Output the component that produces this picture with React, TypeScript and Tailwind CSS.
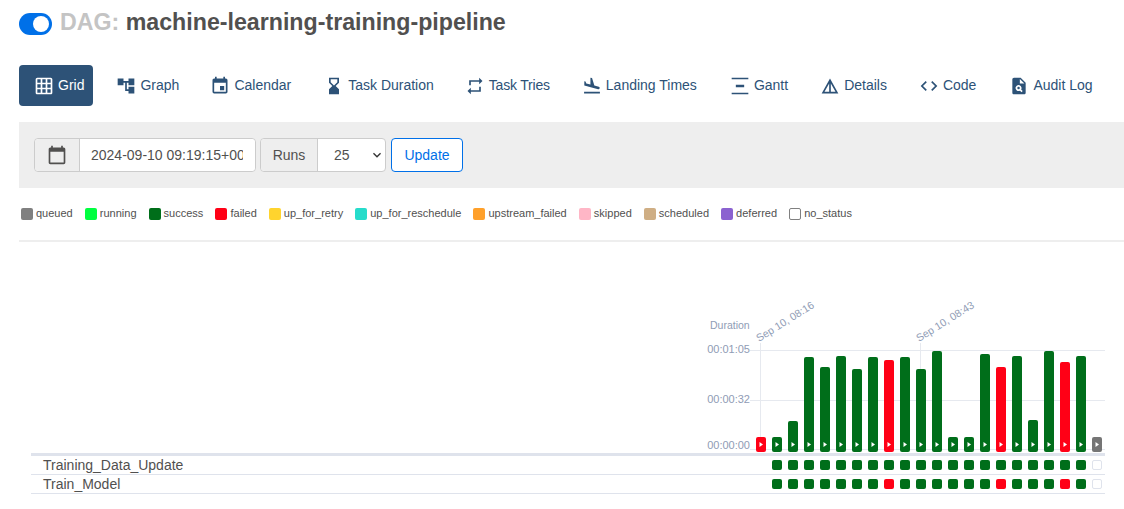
import React from "react";
import {
  MdGridOn, MdAccountTree, MdEvent, MdHourglassBottom, MdRepeat, MdFlightLand,
  MdVerticalDistribute, MdDetails, MdCode, MdPlagiarism, MdCalendarToday, MdExpandMore,
} from "react-icons/md";

const FONT = "font-['Liberation_Sans',Arial,sans-serif]";

const tabs = [
  { label: "Grid", Icon: MdGridOn, active: true, cls: "mr-[7px] bg-[#2d5277] pl-[15px] pr-[9px] text-white" },
  { label: "Graph", Icon: MdAccountTree, cls: "pl-[16px] pr-[15px] text-[#2d5277]" },
  { label: "Calendar", Icon: MdEvent, cls: "pl-[16px] pr-[17px] text-[#2d5277]" },
  { label: "Task Duration", Icon: MdHourglassBottom, cls: "pl-[16px] pr-[15px] text-[#2d5277]" },
  { label: "Task Tries", Icon: MdRepeat, cls: "pl-[16px] pr-[16px] tracking-[-0.2px] text-[#2d5277]" },
  { label: "Landing Times", Icon: MdFlightLand, cls: "pl-[16px] pr-[17px] text-[#2d5277]" },
  { label: "Gantt", Icon: MdVerticalDistribute, cls: "px-[16px] text-[#2d5277]" },
  { label: "Details", Icon: MdDetails, cls: "px-[16px] text-[#2d5277]" },
  { label: "Code", Icon: MdCode, cls: "pl-[16px] pr-[17px] text-[#2d5277]" },
  { label: "Audit Log", Icon: MdPlagiarism, cls: "px-[16px] text-[#2d5277]" },
];

const legend = [
  { label: "queued", cls: "bg-[#808080]" },
  { label: "running", cls: "bg-[#00ff40]" },
  { label: "success", cls: "bg-[#006e1a]" },
  { label: "failed", cls: "bg-[#ff0016]" },
  { label: "up_for_retry", cls: "bg-[#ffd42e]" },
  { label: "up_for_reschedule", cls: "bg-[#26dccb]" },
  { label: "upstream_failed", cls: "bg-[#ffa02a]" },
  { label: "skipped", cls: "bg-[#ffb6c6]" },
  { label: "scheduled", cls: "bg-[#cfae84]" },
  { label: "deferred", cls: "bg-[#8b62d0]" },
  { label: "no_status", cls: "bg-white border border-[#808080]" },
];

const G = "#006e1a";
const R = "#ff0016";
const bars: [number, string][] = [
  [437, R], [437, G], [421, G], [357, G], [367, G], [356, G], [369, G], [357, G], [360, R], [357, G], [369, G],
  [351, G], [437, G], [437, G], [354, G], [367, R], [356, G], [420, G], [351, G], [362, R], [356, G], [437, "#757575"],
];

const row1 = ["", G, G, G, G, G, G, G, G, G, G, G, G, G, G, G, G, G, G, G, G, "n"];
const row2 = ["", G, G, G, G, G, G, G, R, G, G, G, G, G, G, R, G, G, G, R, G, "n"];

// Chart drawing origin in page coordinates
const OX = 700;
const OY = 242;

function DurationChart() {
  const axis = "#8f9cb5";
  return (
    <svg width="424" height="211" className="block" style={{ fontFamily: "'Liberation Sans', Arial, sans-serif" }}>
      {[350, 400, 449].map((y) => (
        <line key={y} x1={750 - OX} x2={1105 - OX} y1={y - OY + 0.5} y2={y - OY + 0.5} stroke="#e6e9ef" />
      ))}
      {[760, 920].map((x) => (
        <line key={x} x1={x - OX + 0.5} x2={x - OX + 0.5} y1={343 - OY} y2={451 - OY} stroke="#e6e9ef" />
      ))}
      <text x={710 - OX} y={329 - OY} fontSize="10.5" fill={axis}>Duration</text>
      <text x={750 - OX} y={353 - OY} fontSize="11" fill={axis} textAnchor="end">00:01:05</text>
      <text x={750 - OX} y={403 - OY} fontSize="11" fill={axis} textAnchor="end">00:00:32</text>
      <text x={750 - OX} y={449 - OY} fontSize="11" fill={axis} textAnchor="end">00:00:00</text>
      <text transform={`translate(${759 - OX} ${342 - OY}) rotate(-32)`} fontSize="10.6" fill={axis}>Sep 10, 08:16</text>
      <text transform={`translate(${919 - OX} ${342 - OY}) rotate(-32)`} fontSize="10.6" fill={axis}>Sep 10, 08:43</text>
      {bars.map(([top, color], i) => {
        const x = 756 + i * 16 - OX;
        return (
          <g key={i}>
            <rect x={x} y={top - OY} width="10" height={452 - top} rx="2" fill={color} />
            <path d={`M${x + 3.5} ${442 - OY}l3.5 2.5l-3.5 2.5z`} fill="#ffffff" />
          </g>
        );
      })}
    </svg>
  );
}

function TaskRow({ name, cells }: { name: string; cells: string[] }) {
  return (
    <div className="flex h-[19px] items-center border-b border-[#dfe3ec]">
      <div className="flex-1 pl-3 text-[14px] leading-[18px] text-[#51504f]">{name}</div>
      <div className="mr-[3px] flex gap-[6px]">
        {cells.map((c, i) =>
          c === "" ? (
            <span key={i} className="h-[10px] w-[10px]" />
          ) : c === "n" ? (
            <span key={i} className="h-[10px] w-[10px] rounded-[2px] border border-[#dfe3ec] bg-white" />
          ) : (
            <span
              key={i}
              className={`h-[10px] w-[10px] rounded-[2px] ${c === R ? "bg-[#ff0016]" : "bg-[#006e1a]"}`}
            />
          ),
        )}
      </div>
    </div>
  );
}

export default function App() {
  return (
    <div className={`${FONT} h-[509px] w-[1124px] overflow-hidden bg-white pl-[19px]`}>
      <div className="flex h-[48px] items-center">
        <span className="relative mr-[8px] h-[22px] w-[33px] rounded-full bg-[#0070e8]">
          <span className="absolute right-[3px] top-[3px] h-[16px] w-[16px] rounded-full bg-white" />
        </span>
        <h1 className="mb-[4px] text-[23.2px] font-bold leading-[30px] text-[#51504f]">
          <span className="text-[#c4c4c4]">DAG: </span>
          machine-learning-training-pipeline
        </h1>
      </div>

      <nav className="mt-[17px] flex h-[41px] items-stretch">
        {tabs.map(({ label, Icon, cls }) => (
          <a key={label} className={`flex shrink-0 items-center gap-[4px] rounded-[4px] text-[14px] ${cls}`}>
            <Icon size={20} />
            <span>{label}</span>
          </a>
        ))}
      </nav>

      <div className="mt-[16px] flex h-[66px] items-center bg-[#eeeeee] pl-[15px]">
        <div className="flex h-[34px] w-[222px] rounded-[4px] border border-[#cccccc] bg-white">
          <span className="flex w-[45px] items-center justify-center rounded-l-[4px] border-r border-[#cccccc] bg-[#eeeeee] text-[#51504f]">
            <MdCalendarToday size={20} />
          </span>
          <input
            readOnly
            value="2024-09-10 09:19:15+00:00"
            className="min-w-0 flex-1 rounded-r-[4px] bg-white pl-[11px] pr-[12px] text-[14px] text-[#51504f] outline-none"
          />
        </div>
        <div className="ml-[4px] flex h-[34px] w-[126px] rounded-[4px] border border-[#cccccc] bg-white">
          <span className="flex w-[57px] items-center justify-center rounded-l-[4px] border-r border-[#cccccc] bg-[#eeeeee] text-[14px] text-[#51504f]">
            Runs
          </span>
          <div className="relative flex-1">
            <select
              defaultValue="25"
              className="h-full w-full appearance-none bg-transparent pl-[16px] text-[14px] text-[#51504f] outline-none"
            >
              <option>25</option>
            </select>
            <MdExpandMore size={16} className="absolute right-[0px] top-[8px] text-[#333333]" />
          </div>
        </div>
        <button className="ml-[5px] h-[34px] w-[72px] rounded-[4px] border border-[#0070e8] bg-white text-[14px] text-[#0070e8]">
          Update
        </button>
      </div>

      <div className="mt-[20px] flex h-[12px] items-center pl-[2px] text-[11px] leading-[11px] text-[#51504f]">
        {legend.map((l) => (
          <span key={l.label} className="mr-[12.1px] flex items-center gap-[3px]">
            <span className={`h-[12px] w-[12px] rounded-[2px] ${l.cls}`} />
            <span className="-mt-[1px]">{l.label}</span>
          </span>
        ))}
      </div>

      <div className="mt-[20px] h-[2px] bg-[#eeeeee]" />

      <div className="ml-[12px] w-[1074px]">
        <div className="-mr-[19px] flex justify-end">
          <DurationChart />
        </div>
        <div className="h-[3px] bg-[#dfe3ec]" />
        <TaskRow name="Training_Data_Update" cells={row1} />
        <TaskRow name="Train_Model" cells={row2} />
      </div>
    </div>
  );
}
